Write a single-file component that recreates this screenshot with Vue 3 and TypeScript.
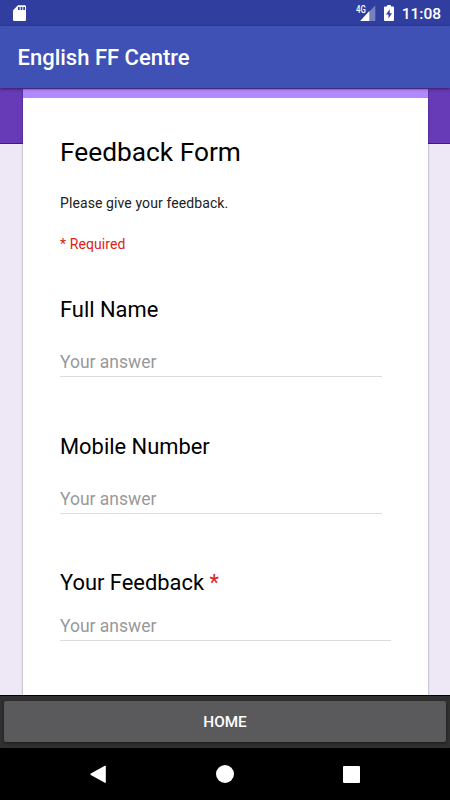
<script setup lang="ts">
interface Question {
  id: string
  label: string
  required: boolean
}

const questions: Question[] = [
  { id: 'name', label: 'Full Name', required: false },
  { id: 'mobile', label: 'Mobile Number', required: false },
  { id: 'feedback', label: 'Your Feedback', required: true },
]
</script>

<template>
  <div class="screen">
    <header class="status-bar">
      <svg class="sd" width="14" height="17" viewBox="0 0 14 17">
        <path d="M5 .2h6.7Q13 .2 13 1.5v13.2Q13 16 11.7 16H1.3Q0 16 0 14.7V5.2z" fill="#fff" />
        <path d="M5 2h1.700v3H5zM7.700 2h1.700v3H7.700zM10.300 2H12v3h-1.700z" fill="#303f9f" />
      </svg>
      <div class="indicators">
        <svg class="signal" width="21" height="18" viewBox="0 0 21 18">
          <path d="M19.300 .4V16H4.200z" fill="#7781c0" />
          <path d="M13.300 6V16H4.200z" fill="#fff" />
          <path d="M0 0h10.500v8.800H0z" fill="#303f9f" />
          <text class="network" x="0" y="7.600" textLength="9.800" lengthAdjust="spacingAndGlyphs">4G</text>
        </svg>
        <svg class="battery" width="10" height="17" viewBox="0 0 10 17">
          <path d="M3.200 0h3.600v1.600H9q1 0 1 1V15q0 1-1 1H1q-1 0-1-1V2.600q0-1 1-1h2.200z" fill="#fff" />
          <path d="M5.700 4.200 2 9.500h2.500V13.500L8 8.200H5.700z" fill="#303f9f" />
        </svg>
        <span class="clock">11:08</span>
      </div>
    </header>
    <div class="app-bar"><h1>English FF Centre</h1></div>
    <main class="page">
      <section class="card">
        <h2>Feedback Form</h2>
        <p class="intro">Please give your feedback.</p>
        <p class="required-note">* Required</p>
        <div v-for="q in questions" :key="q.id" class="question" :class="{ long: q.required }">
          <label :for="q.id">{{ q.label }}<span v-if="q.required" class="star"> *</span></label>
          <input :id="q.id" type="text" placeholder="Your answer" />
        </div>
      </section>
    </main>
    <div class="bottom-bar"><button type="button">HOME</button></div>
    <nav class="nav-bar">
      <svg width="16" height="19" viewBox="0 0 16 19"><path d="M14.800.8q1-.5 1 .5v16q0 1-1 .5L.8 10q-.9-.7 0-1.400z" fill="#fff" /></svg>
      <svg width="18" height="18" viewBox="0 0 18 18"><circle cx="9" cy="9" r="9" fill="#fff" /></svg>
      <svg width="17" height="17" viewBox="0 0 17 17"><rect width="17" height="17" rx="1" fill="#fff" /></svg>
    </nav>
  </div>
</template>

<style>
body {
  margin: 0;
}
</style>

<style scoped>
.screen {
  width: 450px;
  height: 800px;
  display: flex;
  flex-direction: column;
  overflow: hidden;
  font-family: Roboto, sans-serif;
  color: #000;
}
.screen * {
  box-sizing: border-box;
}
.status-bar {
  flex: 0 0 26px;
  background: #303f9f;
  display: flex;
  justify-content: space-between;
  padding: 5px 9px 0 13px;
}
.indicators {
  display: flex;
  align-items: flex-start;
}
.signal {
  margin-right: 7px;
}
.battery {
  margin-right: 8px;
}
.network {
  font-size: 10px;
  font-weight: 500;
  fill: #fff;
}
.clock {
  font-size: 15.500px;
  font-weight: 500;
  line-height: 18px;
  color: #fff;
}
.app-bar {
  flex: 0 0 62px;
  z-index: 1;
  background: #3f51b5;
  box-shadow: 0 1px 3px rgba(0, 0, 0, 0.5);
  display: flex;
  align-items: center;
  padding: 1px 17.500px 0;
}
h1 {
  margin: 0;
  font-size: 22px;
  font-weight: 500;
  color: #fff;
}
.page {
  flex: 0 0 607px;
  padding: 1px 22px 0 23px;
  background: linear-gradient(#673ab7 55px, #5209a6 55px, #5209a6 56px, #ede7f6 56px);
  overflow: hidden;
}
.card {
  height: 640px;
  padding: 0 37px;
  background: #fff;
  border-top: 9px solid #b388ff;
  box-shadow: 0 1px 2px rgba(0, 0, 0, 0.4);
}
h2 {
  margin: 37px 0 0;
  font-size: 26.300px;
  line-height: 34px;
  font-weight: 400;
}
.intro {
  margin: 24px 0 0;
  font-size: 14px;
  line-height: 20px;
  letter-spacing: 0.1px;
  color: #212121;
}
.required-note {
  margin: 21px 0 0;
  font-size: 14px;
  line-height: 20px;
  letter-spacing: 0.1px;
  color: #db2218;
}
.question {
  height: 136.500px;
  padding-top: 41px;
}
label {
  display: block;
  font-size: 21.900px;
  line-height: 30px;
}
.star {
  color: #db2218;
}
input {
  display: block;
  width: 322px;
  height: 28px;
  margin-top: 24px;
  padding: 0 0 1px;
  border: 0;
  border-bottom: 1px solid #dcdcdc;
  background: transparent;
  font-family: inherit;
  font-size: 17.500px;
  color: #000;
}
.long input {
  width: 331px;
  margin-top: 15px;
}
input::placeholder {
  color: #999;
  opacity: 1;
}
.bottom-bar {
  flex: 0 0 53px;
  border-top: 1px solid #000;
  padding: 5px 4px 6px;
  background: #303030;
}
button {
  display: block;
  width: 100%;
  height: 41px;
  padding: 0;
  border: 0;
  border-radius: 2px;
  background: #5a5a5c;
  box-shadow: 0 1px 3px rgba(0, 0, 0, 0.5);
  font-family: inherit;
  font-size: 15.300px;
  font-weight: 500;
  color: #fff;
}
.nav-bar {
  flex: 0 0 52px;
  background: #000;
  display: flex;
  align-items: center;
  justify-content: space-between;
  padding: 0 90px;
}
</style>
